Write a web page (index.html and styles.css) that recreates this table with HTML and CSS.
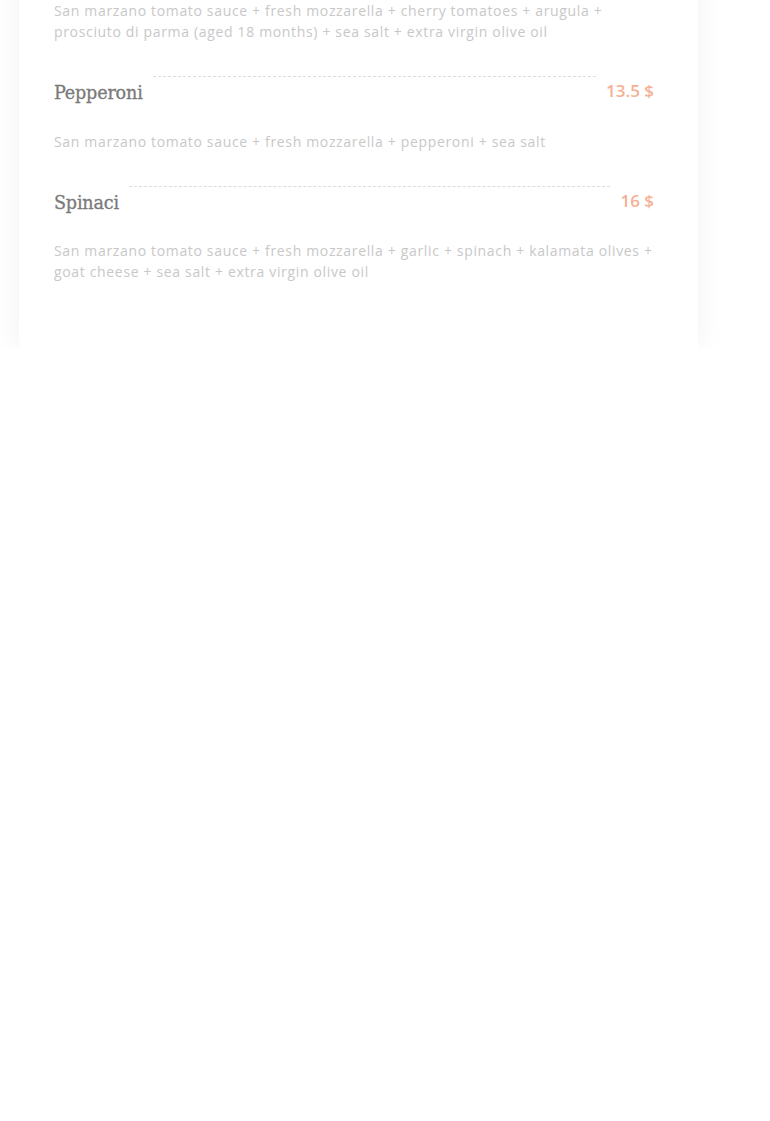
FILE: index.html
```html
<!DOCTYPE html>
<html lang="en">
<head>
<meta charset="utf-8">
<title>Menu</title>
<link rel="stylesheet" href="styles.css">
</head>
<body>
<div class="card">
  <div class="item">
    <p class="desc">San marzano tomato sauce + fresh mozzarella + cherry tomatoes + arugula + prosciuto di parma (aged 18 months) + sea salt + extra virgin olive oil</p>
  </div>
  <div class="item">
    <div class="row">
      <h3 class="name">Pepperoni</h3>
      <span class="sep"></span>
      <span class="price">13.5 $</span>
    </div>
    <p class="desc">San marzano tomato sauce + fresh mozzarella + pepperoni + sea salt</p>
  </div>
  <div class="item">
    <div class="row">
      <h3 class="name">Spinaci</h3>
      <span class="sep"></span>
      <span class="price">16 $</span>
    </div>
    <p class="desc">San marzano tomato sauce + fresh mozzarella + garlic + spinach + kalamata olives + goat cheese + sea salt + extra virgin olive oil</p>
  </div>
</div>
</body>
</html>
```
FILE: styles.css
```css
html, body {
  margin: 0;
  padding: 0;
  background: #ffffff;
}
.card {
  width: 679px;
  box-sizing: border-box;
  margin: -30px 0 0 19px;
  padding: 30px 44px 32px 35px;
  background: #ffffff;
  box-shadow: 0 0 30px rgba(0, 0, 0, 0.06);
}
.item {
  margin-bottom: 34px;
}
.row {
  display: flex;
  align-items: flex-start;
  height: 35px;
}
.name {
  margin: 5px 0 0 0;
  font-family: "DejaVu Serif", serif;
  font-weight: normal;
  font-size: 17.6px;
  line-height: 24px;
  letter-spacing: -0.2px;
  color: #7a7a7a;
  -webkit-text-stroke: 0.3px #7a7a7a;
}
.sep {
  flex: 1;
  margin: 0 10px;
  border-top: 1px dashed #dcdcdc;
}
.price {
  margin-top: 3px;
  font-family: "Open Sans", sans-serif;
  font-weight: 600;
  font-size: 17px;
  line-height: 24px;
  color: #f5b094;
}
.desc {
  margin: 19.5px 0 0 0;
  font-family: "Open Sans", sans-serif;
  font-size: 14px;
  line-height: 21px;
  letter-spacing: 0.66px;
  color: #c8c8c8;
}
.item:first-child .desc {
  margin-top: 0;
}
```
